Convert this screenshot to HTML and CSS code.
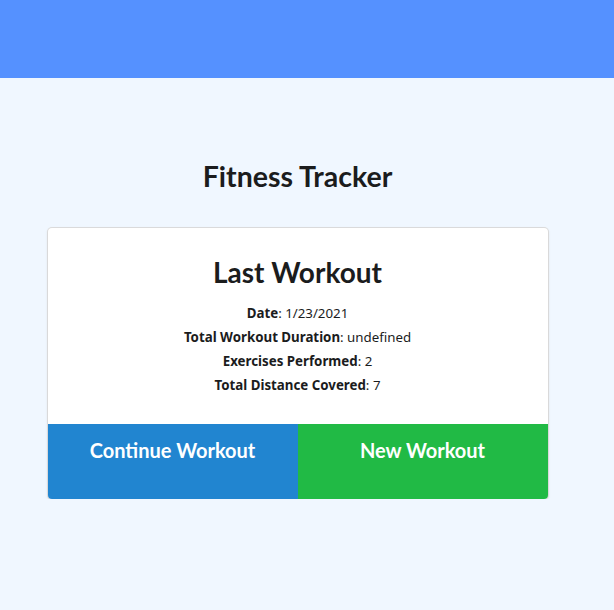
FILE: index.html
```html
<!DOCTYPE html>
<html lang="en">
<head>
<meta charset="UTF-8" />
<meta name="viewport" content="width=device-width, initial-scale=1" />
<title>Fitness Tracker</title>
<link rel="stylesheet" href="styles.css">
</head>
<body>

<header class="topbar"></header>

<main class="wrapper">
  <h1 class="page-title">Fitness Tracker</h1>

  <!-- Last workout summary -->
  <div class="card">
    <div class="card-body">
      <h2 class="card-title">Last Workout</h2>
      <p><strong>Date</strong>: 1/23/2021</p>
      <p><strong>Total Workout Duration</strong>: undefined</p>
      <p><strong>Exercises Performed</strong>: 2</p>
      <p><strong>Total Distance Covered</strong>: 7</p>
    </div>
    <div class="actions">
      <a class="btn btn-blue" href="#">Continue Workout</a>
      <a class="btn btn-green" href="#">New Workout</a>
    </div>
  </div>
</main>

</body>
</html>
```

FILE: styles.css
```css
body {
  margin: 0;
  background: #f0f7ff;
  color: #1b1c1d;
  font-family: 'Noto Sans', 'Open Sans', sans-serif;
}
.topbar {
  height: 78px;
  background: #5591ff;
}
.wrapper {
  display: flex;
  flex-direction: column;
  align-items: center;
  padding: 79px 19px 0 0;
}
.page-title {
  margin: 0 0 33px;
  font-family: Lato, sans-serif;
  font-weight: 700;
  font-size: 28.5px;
  line-height: 38px;
}
.card {
  width: 500px;
  background: #fff;
  border-radius: 4px;
  box-shadow: 0 1px 3px 0 #d4d4d5, 0 0 0 1px #dcdcdd;
  overflow: hidden;
}
.card-body {
  padding: 24px 16px 27px;
  text-align: center;
}
.card-title {
  margin: 0 0 9px;
  font-family: Lato, sans-serif;
  font-weight: 700;
  font-size: 28px;
  line-height: 40px;
}
.card-body p {
  margin: 0;
  font-size: 13.3px;
  line-height: 24px;
}
.card-body strong {
  font-weight: 700;
}
/* bottom buttons */
.actions {
  display: flex;
}
.btn {
  flex: 1;
  height: 75px;
  box-sizing: border-box;
  padding-top: 12px;
  text-align: center;
  color: #fff;
  text-decoration: none;
  font-family: Lato, sans-serif;
  font-weight: 700;
  font-size: 20px;
  line-height: 28px;
}
.btn-blue {
  background: #2185d0;
}
.btn-green {
  background: #21ba45;
}
```
